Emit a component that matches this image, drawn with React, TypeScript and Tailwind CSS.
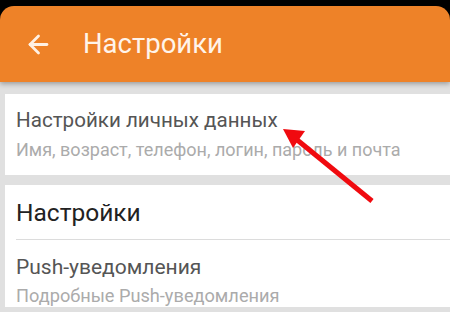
import { ArrowLeft } from "lucide-react";

export default function App() {
  return (
    <div className="relative w-[450px] h-[312px] overflow-hidden bg-black pt-[6px] font-['Roboto','Noto_Sans',sans-serif]">
      <header className="relative z-10 flex h-[76px] items-center rounded-tl-[14px] rounded-tr-[14px] bg-[#ee8228] shadow-[0_2px_5px_rgba(0,0,0,0.3)]">
        <ArrowLeft className="ml-[24px] h-[29px] w-[29px] text-[#fff1e4]" strokeWidth={2.3} />
        <h1 className="ml-[30px] text-[27.5px] text-[#fff4ea]">Настройки</h1>
      </header>
      <main className="h-[230px] bg-[#e0e0e0] pl-[5px] pt-[12px]">
        <section className="flex h-[81px] flex-col bg-white pl-[11px] pt-[13px]">
          <div className="text-[20.6px] leading-[26px] text-[#555]">Настройки личных данных</div>
          <div className="mt-[6px] text-[18px] leading-[22px] text-[#ababab]">Имя, возраст, телефон, логин, пароль и почта</div>
        </section>
        <section className="mt-[10px] bg-white pl-[11px]">
          <div className="border-b border-[#dcdcdc] pb-[10px] pt-[12px] text-[24.5px] leading-[32px] text-[#222]">Настройки</div>
          <div className="pt-[14px] text-[21px] leading-[26px] text-[#555]">Push-уведомления</div>
          <div className="mt-[5px] text-[18.2px] leading-[22px] text-[#ababab]">Подробные Push-уведомления</div>
        </section>
      </main>
      <svg className="absolute left-0 top-0" width="450" height="312" viewBox="0 0 450 312">
        <line x1="372" y1="201" x2="296" y2="139" stroke="#f00a0f" strokeWidth="5" />
        <polygon points="283,129 305,131 293,148" fill="#f00a0f" />
      </svg>
    </div>
  );
}
